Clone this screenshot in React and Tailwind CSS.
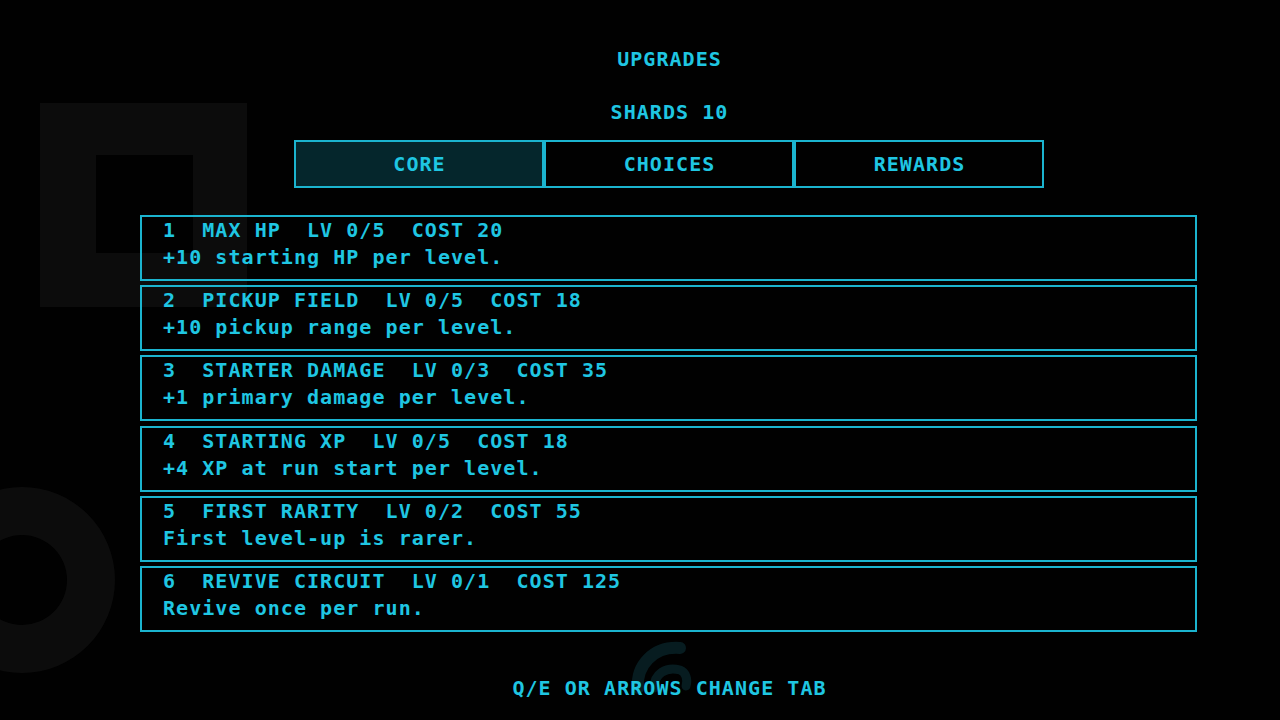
import React from "react";

const rows = [
  { t: "1  MAX HP  LV 0/5  COST 20", d: "+10 starting HP per level." },
  { t: "2  PICKUP FIELD  LV 0/5  COST 18", d: "+10 pickup range per level." },
  { t: "3  STARTER DAMAGE  LV 0/3  COST 35", d: "+1 primary damage per level." },
  { t: "4  STARTING XP  LV 0/5  COST 18", d: "+4 XP at run start per level." },
  { t: "5  FIRST RARITY  LV 0/2  COST 55", d: "First level-up is rarer." },
  { t: "6  REVIVE CIRCUIT  LV 0/1  COST 125", d: "Revive once per run." },
];

const tabs = ["CORE", "CHOICES", "REWARDS"];

export default function App() {
  return (
    <div
      className="relative w-[1280px] h-[720px] overflow-hidden bg-[#010101] text-[#1fc6e2] text-[20px] leading-[27px] tracking-[1.05px] whitespace-pre"
      style={{ fontFamily: '"DejaVu Sans Mono", "Liberation Mono", monospace' }}
    >
      {/* background decorations */}
      <div className="absolute left-[40px] top-[103px] w-[207px] h-[204px] bg-[#0c0c0c] flex items-start">
        <div className="ml-[56px] mt-[52px] w-[97px] h-[98px] bg-[#010101]" />
      </div>
      <div className="absolute left-[-71px] top-[487px] w-[186px] h-[186px] rounded-full bg-[#0c0c0c] flex items-center justify-center">
        <div className="w-[90px] h-[90px] rounded-full bg-[#010101]" />
      </div>
      <svg className="absolute left-[628px] top-[636px]" width="70" height="60" viewBox="0 0 70 60">
        <path d="M10 52 C 8 30, 25 10, 52 12" stroke="#071c20" strokeWidth="12" fill="none" strokeLinecap="round" />
        <path d="M26 52 C 26 38, 38 30, 52 34 C 58 36, 60 44, 58 50" stroke="#071c20" strokeWidth="9" fill="none" strokeLinecap="round" />
      </svg>

      <div className="relative ml-[140px] w-[1057px] flex flex-col items-center pt-[46px] font-bold">
        <div className="pl-[2px]">UPGRADES</div>
        <div className="mt-[26px] pl-[2px]">SHARDS 10</div>
        <div className="mt-[14px] flex">
          {tabs.map((t, i) => (
            <div
              key={t}
              className={
                "w-[250px] h-[48px] border-2 border-[#1bb4cf] flex items-center justify-center pl-[2px] " +
                (i === 0 ? "bg-[#05262c]" : "bg-[#010101]")
              }
            >
              {t}
            </div>
          ))}
        </div>
        <div className="mt-[27px] w-full flex flex-col gap-[4.2px]">
          {rows.map((r) => (
            <div key={r.t} className="h-[66px] border-2 border-[#1bb4cf] pl-[21px]">
              <div>{r.t}</div>
              <div>{r.d}</div>
            </div>
          ))}
        </div>
        <div className="mt-[43px] pl-[2px]">Q/E OR ARROWS CHANGE TAB</div>
      </div>
    </div>
  );
}
